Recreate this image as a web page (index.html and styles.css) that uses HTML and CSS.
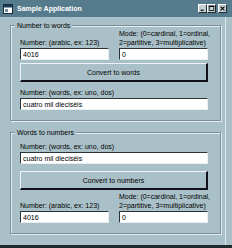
FILE: index.html
```html
<!DOCTYPE html>
<html lang="en">
<head>
  <meta charset="UTF-8">
  <title>Sample Application</title>
  <link rel="stylesheet" href="styles.css">
</head>
<body>
  <div class="ventana">
    <div class="titulo">
      <svg class="icono" width="10" height="10" viewBox="0 0 10 10">
        <rect x="0.5" y="0.5" width="9" height="9" fill="#fff" stroke="#1c2c34"/>
        <rect x="1" y="1" width="8" height="2.5" fill="#1c3c5c"/>
        <rect x="2" y="5" width="3" height="3" fill="#6c8c9c"/>
      </svg>
      <span class="titulo-texto">Sample Application</span>
      <div class="controles">
        <span class="ctl">
          <svg width="9" height="9" viewBox="0 0 9 9"><rect x="2" y="6" width="4" height="1.5" fill="#000"/></svg>
        </span>
        <span class="ctl">
          <svg width="9" height="9" viewBox="0 0 9 9"><rect x="1.5" y="1.5" width="6" height="5.5" fill="none" stroke="#000"/><rect x="1" y="1" width="7" height="1.5" fill="#000"/></svg>
        </span>
        <span class="ctl cerrar">
          <svg width="9" height="9" viewBox="0 0 9 9"><path d="M2 2 L7 7 M7 2 L2 7" stroke="#000" stroke-width="1.3"/></svg>
        </span>
      </div>
    </div>

    <div class="cliente">
      <div class="grupo grupo-1">
        <span class="leyenda">Number to words</span>
        <div class="fila">
          <div class="campo">
            <div class="etiqueta">Number: (arabic, ex: 123)</div>
            <input class="caja" value="4016">
          </div>
          <div class="campo">
            <div class="etiqueta">Mode: (0=cardinal, 1=ordinal,<br>2=partitive, 3=multiplicative)</div>
            <input class="caja" value="0">
          </div>
        </div>
        <button class="boton">Convert to words</button>
        <div class="etiqueta separada">Number: (words, ex: uno, dos)</div>
        <input class="caja" value="cuatro mil dieciséis">
      </div>

      <div class="grupo grupo-2">
        <span class="leyenda">Words to numbers</span>
        <div class="etiqueta">Number: (words, ex: uno, dos)</div>
        <input class="caja" value="cuatro mil dieciséis">
        <button class="boton">Convert to numbers</button>
        <div class="fila">
          <div class="campo">
            <div class="etiqueta">Number: (arabic, ex: 123)</div>
            <input class="caja" value="4016">
          </div>
          <div class="campo">
            <div class="etiqueta">Mode: (0=cardinal, 1=ordinal,<br>2=partitive, 3=multiplicative)</div>
            <input class="caja" value="0">
          </div>
        </div>
      </div>
    </div>
  </div>
</body>
</html>
```
FILE: styles.css
```css
* {
  box-sizing: border-box;
}

body {
  margin: 0;
  padding: 0;
  background-color: #aac0c8;
  font-family: 'Liberation Sans', Arial, sans-serif;
  font-size: 7px;
  color: #000;
}

.ventana {
  width: 232px;
  height: 248px;
  background-color: #aac0c8;
  border-bottom: 3px solid #1e2a30;
}

.titulo {
  height: 17px;
  background-color: #567b8c;
  display: flex;
  align-items: center;
  padding: 0 5px 0 3px;
}

.icono {
  margin-right: 4px;
}

.titulo-texto {
  color: #fff;
  font-weight: bold;
  font-size: 7px;
  flex: 1;
}

.controles {
  display: flex;
  align-items: center;
}

.ctl {
  width: 9px;
  height: 9px;
  background-color: #c4d0d4;
  border-top: 1px solid #fff;
  border-left: 1px solid #fff;
  border-right: 1px solid #1e2a30;
  border-bottom: 1px solid #1e2a30;
  display: flex;
  align-items: center;
  justify-content: center;
}

.ctl svg {
  display: block;
}

.cerrar {
  margin-left: 2px;
}

.cliente {
  width: 226px;
  height: 228px;
  padding: 8px 0 0 10px;
  border-right: 1px solid #dde8ea;
}

.grupo {
  position: relative;
  width: 211px;
  border: 1px solid #7c8e98;
  box-shadow: inset 1px 1px 0 #e4eef0, 1px 1px 0 #e4eef0;
  padding: 3px 12px 10px 9px;
}

.grupo-2 {
  margin-top: 11px;
  padding-top: 9px;
}

.leyenda {
  position: absolute;
  top: -5px;
  left: 4px;
  padding: 0 2px;
  line-height: 9px;
  background-color: #aac0c8;
}

.etiqueta {
  line-height: 9px;
  white-space: nowrap;
}

.separada {
  margin-top: 6px;
}

.fila {
  display: flex;
  gap: 10px;
  align-items: flex-end;
}

.campo {
  width: 89px;
}

.caja {
  display: block;
  width: 100%;
  height: 12px;
  margin: 1px 0 0;
  padding: 0 2px;
  font-family: 'Liberation Sans', Arial, sans-serif;
  font-size: 7px;
  color: #000;
  background-color: #fff;
  border-top: 1px solid #2a3438;
  border-left: 1px solid #2a3438;
  border-right: 1px solid #e8f0f2;
  border-bottom: 1px solid #e8f0f2;
  outline: none;
}

.boton {
  display: block;
  width: 100%;
  height: 19px;
  margin-top: 3px;
  padding: 0;
  font-family: 'Liberation Sans', Arial, sans-serif;
  font-size: 7px;
  color: #000;
  background-color: #aac0c8;
  border-top: 1px solid #eef4f6;
  border-left: 1px solid #eef4f6;
  border-right: 2px solid #101418;
  border-bottom: 2px solid #101418;
}

.grupo-2 .boton {
  margin-top: 7px;
  margin-bottom: 2px;
}
```
